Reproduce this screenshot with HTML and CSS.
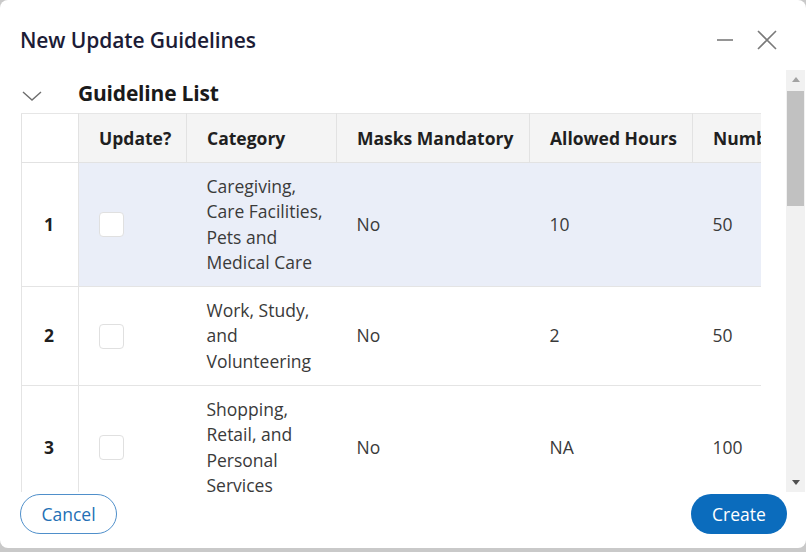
FILE: index.html
```html
<!DOCTYPE html>
<html>
<head>
<meta charset="utf-8">
<link rel="stylesheet" href="styles.css">
</head>
<body>
<div class="dialog">
  <div class="dlg-head">
    <h1 class="title">New Update Guidelines</h1>
    <div class="head-actions">
      <svg class="ico-min" width="18" height="18" viewBox="0 0 18 18"><path d="M1 9h16" stroke="#7a7a7a" stroke-width="1.6"/></svg>
      <svg class="ico-close" width="22" height="22" viewBox="0 0 22 22"><path d="M2 2L20 20M20 2L2 20" stroke="#7a7a7a" stroke-width="1.6"/></svg>
    </div>
  </div>
  <div class="dlg-body">
    <div class="content">
      <div class="section-head">
        <svg class="chev" width="20" height="10" viewBox="0 0 20 10"><path d="M1 1l9 8 9-8" fill="none" stroke="#6e6e6e" stroke-width="1.4"/></svg>
        <span class="section-title">Guideline List</span>
      </div>
      <div class="table-wrap">
        <table class="grid">
          <colgroup>
            <col class="c-idx"><col class="c-upd"><col class="c-cat"><col class="c-mask"><col class="c-hrs"><col class="c-num"><col class="c-more">
          </colgroup>
          <thead>
            <tr>
              <th class="idx"></th>
              <th>Update?</th>
              <th>Category</th>
              <th>Masks Mandatory</th>
              <th>Allowed Hours</th>
              <th>Number of People</th>
              <th>Notes</th>
            </tr>
          </thead>
          <tbody>
            <tr class="sel">
              <td class="idx">1</td>
              <td><span class="cb"></span></td>
              <td class="cat">Caregiving, Care Facilities, Pets and Medical Care</td>
              <td>No</td>
              <td>10</td>
              <td>50</td>
              <td></td>
            </tr>
            <tr>
              <td class="idx">2</td>
              <td><span class="cb"></span></td>
              <td class="cat">Work, Study, and Volunteering</td>
              <td>No</td>
              <td>2</td>
              <td>50</td>
              <td></td>
            </tr>
            <tr>
              <td class="idx">3</td>
              <td><span class="cb"></span></td>
              <td class="cat">Shopping, Retail, and Personal Services</td>
              <td>No</td>
              <td>NA</td>
              <td>100</td>
              <td></td>
            </tr>
          </tbody>
        </table>
      </div>
    </div>
    <div class="vscroll">
      <div class="sb-btn"><span class="tri-up"></span></div>
      <div class="sb-thumb"></div>
      <div class="sb-track"></div>
      <div class="sb-btn"><span class="tri-down"></span></div>
    </div>
  </div>
  <div class="dlg-foot">
    <button class="btn btn-outline">Cancel</button>
    <button class="btn btn-primary">Create</button>
  </div>
</div>
</body>
</html>
```
FILE: styles.css
```css
html, body {
  margin: 0;
  padding: 0;
}
body {
  background: #c9c9c9;
  font-family: "Open Sans", "Noto Sans", sans-serif;
  width: 806px;
  height: 552px;
  overflow: hidden;
}
.dialog {
  width: 806px;
  height: 548px;
  background: #fff;
  border-radius: 8px;
  display: flex;
  flex-direction: column;
  overflow: hidden;
}
.dlg-head {
  height: 70px;
  display: flex;
  align-items: center;
  justify-content: space-between;
  padding: 10px 28px 0 20px;
  box-sizing: border-box;
}
.title {
  margin: 0;
  font-size: 21px;
  font-weight: 600;
  color: #1c1c36;
  letter-spacing: -0.1px;
}
.head-actions {
  display: flex;
  align-items: center;
  gap: 22px;
}
.dlg-body {
  height: 422px;
  display: flex;
}
.content {
  flex: 1;
  overflow: hidden;
  padding: 0 25px 0 21px;
}
.section-head {
  height: 43px;
  display: flex;
  align-items: center;
  padding-top: 3px;
  box-sizing: border-box;
}
.chev {
  margin-left: 1px;
  width: 20px;
  position: relative;
  top: 3px;
}
.section-title {
  margin-left: 36px;
  font-size: 21px;
  font-weight: 700;
  color: #1a1a1a;
  letter-spacing: -0.2px;
}
.table-wrap {
  overflow: hidden;
  width: 740px;
}
.grid {
  border-collapse: collapse;
  table-layout: fixed;
  width: 1000px;
  font-size: 17.5px;
  color: #3a3a3a;
}
.c-idx { width: 57px; }
.c-upd { width: 108px; }
.c-cat { width: 150px; }
.c-mask { width: 193px; }
.c-hrs { width: 163px; }
.c-num { width: 180px; }
.c-more { width: 149px; }
.grid th {
  height: 49px;
  padding: 0 12px 0 20px;
  box-sizing: border-box;
  text-align: left;
  font-weight: 700;
  color: #1f1f1f;
  background: #f4f4f4;
  border: 1px solid #e2e2e2;
  border-top-color: #e6e6e6;
  white-space: nowrap;
  overflow: hidden;
}
.grid th.idx {
  background: #fff;
}
.grid td {
  padding: 11px 10px 11px 20px;
  line-height: 25.3px;
  vertical-align: middle;
  border-bottom: 1px solid #e4e4e4;
}
.grid td.idx {
  text-align: center;
  font-weight: 700;
  color: #1f1f1f;
  background: #fff;
  border-right: 1px solid #e4e4e4;
  border-left: 1px solid #e4e4e4;
  padding: 0 2px 0 0;
}
.grid tr.sel td {
  background: #eaeef8;
}
.grid tr.sel td.idx {
  background: #fff;
}
.cb {
  display: block;
  width: 25px;
  height: 25px;
  box-sizing: border-box;
  border: 1px solid #e0e0e0;
  border-radius: 4px;
  background: #fff;
}
.vscroll {
  width: 19px;
  margin-right: 1px;
  background: #f1f1f1;
  display: flex;
  flex-direction: column;
}
.sb-btn {
  height: 19px;
  display: flex;
  align-items: center;
  justify-content: center;
}
.tri-up {
  width: 0;
  height: 0;
  border-left: 4px solid transparent;
  border-right: 4px solid transparent;
  border-bottom: 5px solid #a3a3a3;
}
.tri-down {
  width: 0;
  height: 0;
  border-left: 4px solid transparent;
  border-right: 4px solid transparent;
  border-top: 5px solid #505050;
}
.sb-thumb {
  height: 115px;
  margin: 2px 1px 0;
  background: #c1c1c1;
}
.sb-track {
  flex: 1;
}
.dlg-foot {
  flex: 1;
  display: flex;
  justify-content: space-between;
  align-items: flex-start;
  padding: 2px 19px 0 20px;
}
.btn {
  height: 40px;
  border-radius: 20px;
  font-family: "Open Sans", "Noto Sans", sans-serif;
  font-size: 17.5px;
  padding: 0 10px;
  cursor: pointer;
}
.btn-outline {
  width: 97px;
  background: #fff;
  color: #2470b5;
  border: 1px solid #4f8fca;
}
.btn-primary {
  width: 96px;
  background: #0b6cbd;
  color: #fff;
  border: none;
}
```
